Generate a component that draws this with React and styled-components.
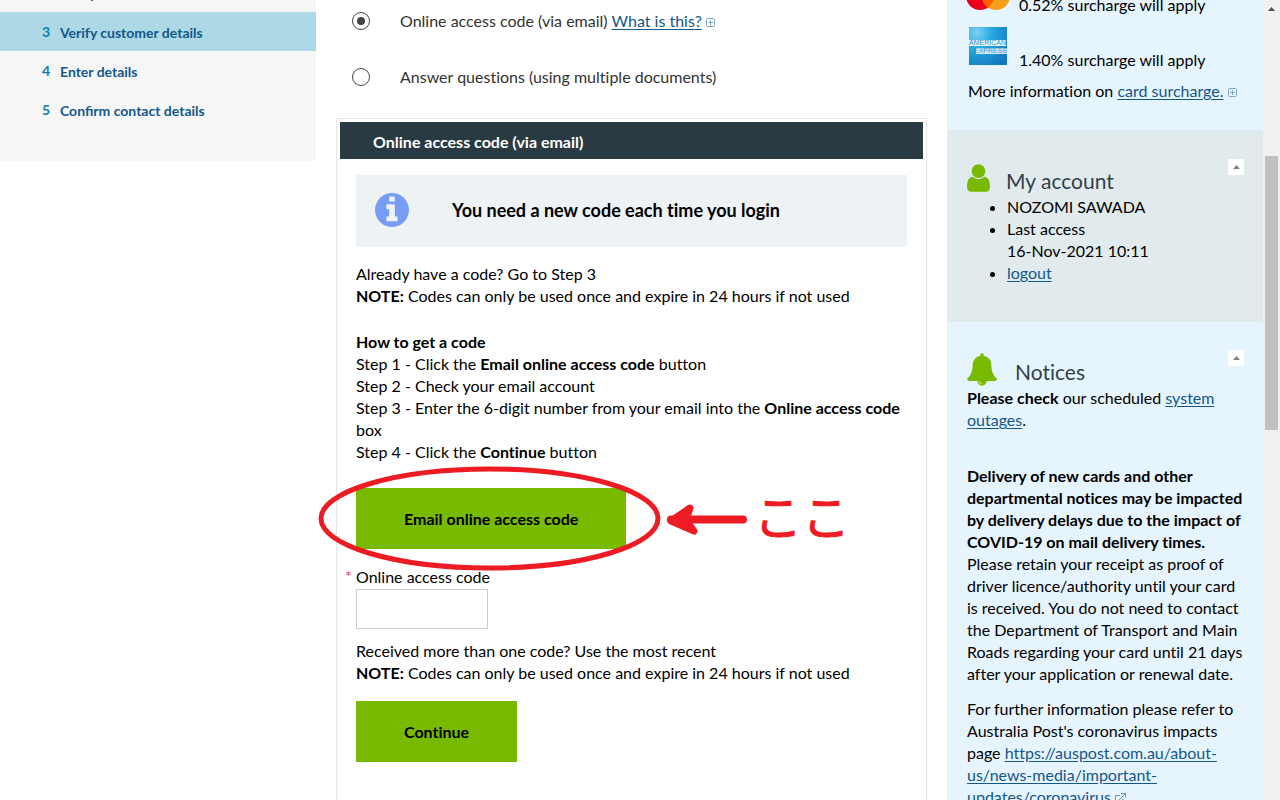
import React, { useState } from 'react';
import styled, { createGlobalStyle } from 'styled-components';

const GlobalStyle = createGlobalStyle`
  * {
    box-sizing: border-box;
  }

  body {
    margin: 0;
    background: #fff;
    color: #000;
    font-family: Lato, "Liberation Sans", sans-serif;
    font-size: 16px;
    font-variant-ligatures: no-common-ligatures;
    line-height: 22px;
  }

  a {
    color: #13578b;
    text-underline-offset: 2px;
  }
`;

const Shell = styled.div`
  display: grid;
  grid-template-columns: 316px minmax(0, 1fr) 316px 17px;
  height: 100vh;
  overflow: hidden;
`;

const Steps = styled.ol`
  align-self: start;
  list-style: none;
  margin: -27px 0 0;
  padding: 0 0 32px;
  background: #f6f6f6;
  font-variant-ligatures: normal;
`;

const Step = styled.li`
  display: flex;
  gap: 10px;
  height: 39px;
  padding: 10px 16px 0 42px;
  background: ${({ $active }) => ($active ? '#add8e6' : 'transparent')};
  color: #13578b;
  font-size: 14px;
  font-weight: bold;
`;

const StepNumber = styled.span`
  width: 8px;
  color: #0780b0;
  line-height: 20px;
`;

const Main = styled.main`
  padding: 0 20px;
`;

const Methods = styled.div`
  margin: -7px 0 13px;
`;

const Method = styled.div`
  display: flex;
  align-items: center;
  gap: 30px;
  height: 56px;
  padding-left: 16px;
  color: #333;
`;

const Radio = styled.input`
  appearance: none;
  display: grid;
  place-items: center;
  width: 18px;
  height: 18px;
  margin: 0;
  border: 1px solid #444;
  border-radius: 50%;

  &:checked::before {
    content: "";
    width: 8px;
    height: 8px;
    border-radius: 50%;
    background: #444;
  }
`;

const Panel = styled.section`
  min-height: 720px;
  padding: 3px;
  border: 1px solid #e5e5e5;
`;

const PanelTitle = styled.h2`
  margin: 0;
  padding: 9px 33px 6px;
  background: #293a42;
  color: #fff;
  font-size: 16px;
  line-height: 22px;
`;

const PanelBody = styled.div`
  padding: 16px;
`;

const Info = styled.div`
  display: flex;
  align-items: center;
  gap: 43px;
  height: 72px;
  margin-bottom: 16px;
  padding: 0 19px 2px;
  background: #edf2f5;
  font-size: 18px;
  font-weight: bold;
`;

const Text = styled.p`
  margin: 0 0 ${({ $after = '24px' }) => $after};
`;

const Button = styled.button`
  display: block;
  height: 61px;
  padding: 0 48px;
  border: 0;
  background: #78ba00;
  color: #000;
  font: bold 16px/22px Lato, sans-serif;
  font-variant-ligatures: no-common-ligatures;
`;

const Marked = styled.div`
  position: relative;
  width: fit-content;
  margin-bottom: 17px;
`;

const Mark = styled.svg`
  position: absolute;
  left: -38px;
  top: -22px;
  pointer-events: none;
`;

const MarkText = styled.span`
  position: absolute;
  left: 398px;
  top: -4px;
  color: #ed1c24;
  font: 48px/61px "Noto Sans CJK JP", sans-serif;
  -webkit-text-stroke: 1px #ed1c24;
  white-space: nowrap;
`;

const Field = styled.div`
  margin-bottom: 11px;
`;

const Label = styled.label`
  position: relative;
  display: block;
  margin-bottom: 1px;
`;

const Required = styled.span`
  position: absolute;
  left: -11px;
  top: -1px;
  color: #ee3368;
  font-size: 16px;
`;

const CodeInput = styled.input`
  display: block;
  width: 132px;
  height: 40px;
  padding: 0 8px;
  border: 1px solid #ccc;
  font: inherit;
`;

const Aside = styled.aside`
  margin-top: -28px;
`;

const Block = styled.section`
  padding: ${({ $pad }) => $pad};
  background: ${({ $tone }) => ($tone === 'grey' ? '#e1ebee' : '#e6f4fe')};
`;

const CardRow = styled.div`
  display: flex;
  align-items: flex-end;
  gap: 10px;
  height: 44px;
  margin-bottom: 11px;
`;

const CardLogo = styled.span`
  display: flex;
  justify-content: center;
  width: 42px;
  padding-bottom: 6px;

  svg {
    flex: none;
  }
`;

const CardNote = styled.p`
  margin: -2px 0 0 1px;
`;

const BlockHead = styled.header`
  display: flex;
  align-items: flex-start;
  height: 37px;
`;

const BlockTitle = styled.h2`
  flex: 1;
  margin: 8px 0 0 ${({ $gap }) => $gap};
  color: #333f48;
  font-size: 21px;
  font-weight: normal;
  line-height: 28px;
`;

const HeadIcon = styled.span`
  display: flex;
  padding-top: ${({ $top }) => $top};
`;

const Toggle = styled.button`
  display: grid;
  place-items: center;
  width: 16px;
  height: 16px;
  margin-right: -1px;
  padding: 0;
  border: 0;
  background: #fff;
`;

const AccountList = styled.ul`
  margin: 0;
  padding-left: 40px;
`;

const Notice = styled.p`
  margin: 0 0 ${({ $after }) => $after};
`;

const Scrollbar = styled.div`
  display: flex;
  flex-direction: column;
  align-items: center;
  justify-content: space-between;
  padding: 7px 0;
  background: #f1f1f1;
`;

const Track = styled.div`
  flex: 1;
  width: 13px;
  padding-top: 145px;
`;

const Thumb = styled.div`
  height: 274px;
  background: #c1c1c1;
`;

const steps = [
  { number: 2, title: 'Accept terms' },
  { number: 3, title: 'Verify customer details', active: true },
  { number: 4, title: 'Enter details' },
  { number: 5, title: 'Confirm contact details' },
];

const PlusBox = () => (
  <svg width="9" height="9" viewBox="0 0 9 9" fill="none" stroke="#7fa8c7">
    <rect x="0.5" y="0.5" width="8" height="8" rx="1" />
    <path d="M2 4.5h5M4.5 2v5" />
  </svg>
);

const External = () => (
  <svg width="11" height="10" viewBox="0 0 11 10" fill="none" stroke="#5f93ba">
    <path d="M5 2.5H.5v7h7V6M6 .5h4.500v4M10 1L4 7" />
  </svg>
);

const Arrow = ({ down, color = '#505050' }) => (
  <svg width="7" height="4" viewBox="0 0 7 4">
    <path d={down ? 'M0 0h7L3.500 4z' : 'M0 4h7L3.500 0z'} fill={color} />
  </svg>
);

const InfoIcon = () => (
  <svg width="34" height="34" viewBox="128 128 1536 1536" fill="#779cf3">
    <path d="M1152 1376v-160q0-14-9-23t-23-9h-96v-512q0-14-9-23t-23-9h-320q-14 0-23 9t-9 23v160q0 14 9 23t23 9h96v320h-96q-14 0-23 9t-9 23v160q0 14 9 23t23 9h448q14 0 23-9t9-23zm-128-896v-160q0-14-9-23t-23-9h-192q-14 0-23 9t-9 23v160q0 14 9 23t23 9h192q14 0 23-9t9-23zm640 416q0 209-103 385.5t-279.5 279.5-385.5 103-385.5-103-279.5-279.5-103-385.5 103-385.5 279.5-279.5 385.5-103 385.5 103 279.5 279.5 103 385.5z" />
  </svg>
);

const UserIcon = () => (
  <svg width="23" height="28" viewBox="0 128 1280 1536" fill="#78ba00">
    <path d="M1280 1399q0 109-62.5 187t-150.5 78h-854q-88 0-150.5-78t-62.5-187q0-85 8.5-160.5t31.5-152 58.5-131 94-89 134.5-34.5q131 128 313 128t313-128q76 0 134.5 34.5t94 89 58.5 131 31.5 152 8.5 160.5zm-256-887q0 159-112.5 271.5t-271.5 112.5-271.5-112.5-112.5-271.5 112.5-271.5 271.5-112.5 271.5 112.5 112.5 271.5z" />
  </svg>
);

const BellIcon = () => (
  <svg width="30" height="33" viewBox="64 0 1664 1792" fill="#78ba00">
    <path d="M912 1696q0-16-16-16-59 0-101.5-42.5t-42.5-101.5q0-16-16-16t-16 16q0 73 51.5 124.5t124.5 51.5q16 0 16-16zm816-288q0 52-38 90t-90 38h-448q0 106-75 181t-181 75-181-75-75-181h-448q-52 0-90-38t-38-90q50-42 91-88t85-119.5 74.5-158.5 50-206 19.5-260q0-152 117-282.5t307-158.5q-8-19-8-39 0-40 28-68t68-28 68 28 28 68q0 20-8 39 190 28 307 158.5t117 282.5q0 139 19.5 260t50 206 74.5 158.5 85 119.5 91 88z" />
  </svg>
);

const MasterCard = () => (
  <svg width="44" height="28" viewBox="0 0 44 28">
    <circle cx="14" cy="14" r="14" fill="#eb001b" />
    <circle cx="30" cy="14" r="14" fill="#f79e1b" />
    <path d="M22 2.500a14 14 0 0 1 0 23a14 14 0 0 1 0-23z" fill="#ff5f00" />
  </svg>
);

const Amex = () => (
  <svg width="38" height="38" viewBox="0 0 38 38">
    <defs>
      <radialGradient id="amex" cx="0.2" cy="0.15" r="1">
        <stop offset="0" stopColor="#7fd0f3" />
        <stop offset="0.4" stopColor="#27a9e1" />
        <stop offset="1" stopColor="#1478be" />
      </radialGradient>
    </defs>
    <rect width="38" height="38" fill="url(#amex)" />
    <rect y="13" width="37" height="6" fill="#e8f5fc" />
    <rect x="7" y="21" width="31" height="6" fill="#d5e8f7" />
    <g fill="#2e93cf" fontFamily="Liberation Sans, sans-serif" fontSize="7">
      <text x="0" y="18">AMERICAN</text>
      <text x="5" y="26">EXPRESS</text>
    </g>
  </svg>
);

const App = () => {
  const [method, setMethod] = useState('code');
  const [code, setCode] = useState('');

  return (
    <>
      <GlobalStyle />
      <Shell>
        <Steps>
          {steps.map((step) => (
            <Step key={step.number} $active={step.active}>
              <StepNumber>{step.number}</StepNumber>
              <span>{step.title}</span>
            </Step>
          ))}
        </Steps>

        <Main>
          <Methods>
            <Method>
              <Radio
                type="radio"
                id="method-code"
                name="method"
                checked={method === 'code'}
                onChange={() => setMethod('code')}
              />
              <span>
                <label htmlFor="method-code">Online access code (via email)</label>{' '}
                <a href="#help">What is this?</a> <PlusBox />
              </span>
            </Method>
            <Method>
              <Radio
                type="radio"
                id="method-questions"
                name="method"
                checked={method === 'questions'}
                onChange={() => setMethod('questions')}
              />
              <label htmlFor="method-questions">Answer questions (using multiple documents)</label>
            </Method>
          </Methods>

          <Panel>
            <PanelTitle>Online access code (via email)</PanelTitle>
            <PanelBody>
              <Info>
                <InfoIcon />
                <span>You need a new code each time you login</span>
              </Info>
              <Text>
                Already have a code? Go to Step 3<br />
                <b>NOTE:</b> Codes can only be used once and expire in 24 hours if not used
              </Text>
              <Text $after="25px">
                <b>How to get a code</b><br />
                Step 1 - Click the <b>Email online access code</b> button<br />
                Step 2 - Check your email account<br />
                Step 3 - Enter the 6-digit number from your email into the <b>Online access code</b> box<br />
                Step 4 - Click the <b>Continue</b> button
              </Text>

              <Marked>
                <Button type="button">Email online access code</Button>
                <Mark width="432" height="106" fill="none" stroke="#ed1c24">
                  <ellipse cx="171.500" cy="52.500" rx="168.500" ry="49.500" strokeWidth="5" />
                  <path d="M353 53.500H425" strokeWidth="8" strokeLinecap="round" />
                  <path
                    d="M372 42L353 55L376 65L368 54Z"
                    fill="#ed1c24"
                    strokeWidth="7"
                    strokeLinecap="round"
                    strokeLinejoin="round"
                  />
                </Mark>
                <MarkText lang="ja">ここ</MarkText>
              </Marked>

              <Field>
                <Label htmlFor="access-code">
                  <Required>*</Required>
                  Online access code
                </Label>
                <CodeInput
                  id="access-code"
                  value={code}
                  onChange={(e) => setCode(e.target.value)}
                />
              </Field>
              <Text $after="17px">
                Received more than one code? Use the most recent<br />
                <b>NOTE:</b> Codes can only be used once and expire in 24 hours if not used
              </Text>
              <Button type="button">Continue</Button>
            </PanelBody>
          </Panel>
        </Main>

        <Aside>
          <Block $pad="0 20px 28px">
            <CardRow>
              <CardLogo><MasterCard /></CardLogo>
              <span>0.52% surcharge will apply</span>
            </CardRow>
            <CardRow>
              <CardLogo><Amex /></CardLogo>
              <span>1.40% surcharge will apply</span>
            </CardRow>
            <CardNote>
              More information on <a href="#surcharge">card surcharge.</a> <PlusBox />
            </CardNote>
          </Block>

          <Block $tone="grey" $pad="29px 20px 38px">
            <BlockHead>
              <HeadIcon $top="5px"><UserIcon /></HeadIcon>
              <BlockTitle $gap="16px">My account</BlockTitle>
              <Toggle type="button" aria-label="Collapse my account">
                <Arrow color="#808080" />
              </Toggle>
            </BlockHead>
            <AccountList>
              <li>NOZOMI SAWADA</li>
              <li>Last access<br />16-Nov-2021 10:11</li>
              <li><a href="#logout">logout</a></li>
            </AccountList>
          </Block>

          <Block $pad="28px 20px 0">
            <BlockHead>
              <HeadIcon $top="3px"><BellIcon /></HeadIcon>
              <BlockTitle $gap="18px">Notices</BlockTitle>
              <Toggle type="button" aria-label="Collapse notices">
                <Arrow color="#808080" />
              </Toggle>
            </BlockHead>
            <Notice $after="34px">
              <b>Please check</b> our scheduled <a href="#outages">system outages</a>.
            </Notice>
            <Notice $after="13px">
              <b>
                Delivery of new cards and other departmental notices may be impacted by
                delivery delays due to the impact of COVID-19 on mail delivery times.
              </b>{' '}
              Please retain your receipt as proof of driver licence/authority until your card
              is received. You do not need to contact the Department of Transport and Main
              Roads regarding your card until 21 days after your application or renewal date.
            </Notice>
            <Notice $after="24px">
              For further information please refer to Australia Post's coronavirus impacts
              page{' '}
              <a href="#auspost">https://auspost.com.au/about-us/news-media/important-updates/coronavirus</a>{' '}
              <External />
            </Notice>
          </Block>
        </Aside>

        <Scrollbar aria-hidden="true">
          <Arrow />
          <Track>
            <Thumb />
          </Track>
          <Arrow down />
        </Scrollbar>
      </Shell>
    </>
  );
};

export default App;
